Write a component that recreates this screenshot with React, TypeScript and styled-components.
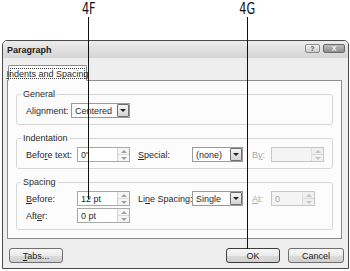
import * as React from 'react';
import styled, { createGlobalStyle } from 'styled-components';

const GlobalStyle = createGlobalStyle`
  html, body {
    margin: 0;
    padding: 0;
    background: #fff;
  }
  body {
    font-family: 'Liberation Sans', Arial, sans-serif;
    font-size: 9px;
    color: #2a2a2a;
  }
`;

const Page = styled.div`
  position: relative;
  width: 350px;
  height: 271px;
  overflow: hidden;
  background: #fff;
  padding-top: 40px;
  box-sizing: border-box;
`;

// callouts sit over the dialog
const Callout = styled.div<{ $x: number }>`
  position: absolute;
  top: 0;
  left: ${p => p.$x - 15}px;
  width: 31px;
  display: flex;
  flex-direction: column;
  align-items: center;
  z-index: 10;
  pointer-events: none;
`;

const CalloutLabel = styled.div`
  font-family: 'DejaVu Sans Condensed', 'DejaVu Sans', sans-serif;
  font-size: 16px;
  line-height: 17px;
  height: 17px;
  color: #111;
  transform: scaleX(0.78);
`;

const CalloutLine = styled.div<{ $len: number }>`
  width: 1px;
  height: ${p => p.$len}px;
  background: #111;
`;

const Dialog = styled.div`
  margin-left: 2px;
  width: 347px;
  height: 229px;
  box-sizing: border-box;
  border: 1px solid #4a4a4a;
  border-radius: 5px 5px 0 0;
  background: #eeeeee;
  display: flex;
  flex-direction: column;
`;

const TitleBar = styled.div`
  height: 17px;
  flex-shrink: 0;
  display: flex;
  align-items: center;
  padding: 0 3px 0 4px;
  background: linear-gradient(#ececec, #d5d5d5);
  border-radius: 4px 4px 0 0;
`;

const Title = styled.div`
  flex: 1;
  font-weight: bold;
  font-size: 9px;
  color: #1a1a1a;
`;

const CaptionButtons = styled.div`
  display: flex;
  gap: 3px;
  align-self: flex-start;
  margin-top: 3px;
`;

const CaptionButton = styled.div<{ $close?: boolean }>`
  width: ${p => (p.$close ? 22 : 15)}px;
  height: 9px;
  box-sizing: border-box;
  border: 1px solid ${p => (p.$close ? '#6a6a6a' : '#8a8a8a')};
  border-radius: 2px;
  background: ${p =>
    p.$close ? 'linear-gradient(#bdbdbd, #8d8d8d)' : 'linear-gradient(#f2f2f2, #cacaca)'};
  color: ${p => (p.$close ? '#f4f4f4' : '#555')};
  font-size: 7px;
  font-weight: bold;
  line-height: 7px;
  display: flex;
  align-items: center;
  justify-content: center;
`;

const Body = styled.div`
  flex: 1;
  display: flex;
  flex-direction: column;
  padding: 7px 4px 5px 4px;
`;

const TabStrip = styled.div`
  display: flex;
  position: relative;
  z-index: 1;
  margin-bottom: -1px;
`;

const Tab = styled.div`
  margin-left: 1px;
  width: 79px;
  height: 16px;
  box-sizing: border-box;
  border: 1px solid #8c8c8c;
  border-bottom: 1px solid #fff;
  border-radius: 2px 2px 0 0;
  background: #fff;
  padding: 2px 1px 1px;
`;

const FocusRect = styled.div`
  height: 100%;
  box-sizing: border-box;
  border: 1px dotted #444;
  display: flex;
  align-items: center;
  justify-content: center;
  white-space: nowrap;
`;

const Panel = styled.div`
  height: 159px;
  margin-right: 2px;
  box-sizing: border-box;
  border: 1px solid #8c8c8c;
  background: #fcfcfc;
  padding: 8px 8px 0;
  display: flex;
  flex-direction: column;
  gap: 8px;
`;

const Group = styled.fieldset`
  margin: 0;
  padding: 4px 9px 6px;
  border: 1px solid #d6d6d6;
  border-radius: 3px;
  min-width: 0;
  display: flex;
  flex-direction: column;
  gap: 2px;
`;

const Legend = styled.legend`
  padding: 0 2px;
  margin-left: -5px;
  line-height: 10px;
  height: 10px;
  font-size: 9px;
`;

const Row = styled.div`
  display: flex;
  align-items: center;
  height: 15px;
`;

const Label = styled.div<{ $w: number; $ml?: number; $disabled?: boolean }>`
  width: ${p => p.$w}px;
  margin-left: ${p => p.$ml || 0}px;
  flex-shrink: 0;
  white-space: nowrap;
  color: ${p => (p.$disabled ? '#a8a8a8' : '#2a2a2a')};
`;

const Combo = styled.div<{ $w: number }>`
  width: ${p => p.$w}px;
  height: 15px;
  flex-shrink: 0;
  box-sizing: border-box;
  border: 1px solid #9a9a9a;
  background: #fff;
  display: flex;
  align-items: center;
  padding-left: 3px;
`;

const FieldText = styled.span<{ $disabled?: boolean }>`
  flex: 1;
  white-space: nowrap;
  color: ${p => (p.$disabled ? '#a8a8a8' : '#2a2a2a')};
`;

const DropButton = styled.div`
  width: 12px;
  height: 13px;
  box-sizing: border-box;
  border: 1px solid #6e6e6e;
  border-radius: 1px;
  background: linear-gradient(#f6f6f6, #d4d4d4);
  display: flex;
  align-items: center;
  justify-content: center;
`;

const Arrow = styled.span<{ $up?: boolean; $color: string }>`
  width: 0;
  height: 0;
  border-left: 3px solid transparent;
  border-right: 3px solid transparent;
  ${p =>
    p.$up ? `border-bottom: 3px solid ${p.$color};` : `border-top: 3px solid ${p.$color};`}
`;

const Spin = styled.div<{ $w: number; $disabled?: boolean }>`
  width: ${p => p.$w}px;
  height: 15px;
  flex-shrink: 0;
  box-sizing: border-box;
  border: 1px solid ${p => (p.$disabled ? '#c6c6c6' : '#a8a8a8')};
  background: ${p => (p.$disabled ? '#f4f4f4' : '#fff')};
  display: flex;
  align-items: stretch;
  padding-left: 3px;
  > span {
    align-self: center;
  }
`;

const Spinner = styled.div<{ $disabled?: boolean }>`
  width: 11px;
  display: flex;
  flex-direction: column;
  border-left: 1px solid ${p => (p.$disabled ? '#dcdcdc' : '#d2d2d2')};
  background: ${p => (p.$disabled ? '#f0f0f0' : '#f5f5f5')};
`;

const SpinHalf = styled.div`
  flex: 1;
  display: flex;
  align-items: center;
  justify-content: center;
  & + & {
    border-top: 1px solid #dadada;
  }
`;

const Footer = styled.div`
  display: flex;
  align-items: center;
  margin-top: 9px;
  padding-left: 2px;
`;

const Button = styled.div<{ $w: number; $default?: boolean; $ml?: number }>`
  width: ${p => p.$w}px;
  margin-left: ${p => p.$ml || 0}px;
  height: 15px;
  box-sizing: border-box;
  border: 1px solid ${p => (p.$default ? '#3e3e3e' : '#707070')};
  border-radius: 3px;
  background: linear-gradient(#f7f7f7 0%, #ebebeb 50%, #dcdcdc 51%, #cfcfcf 100%);
  display: flex;
  align-items: center;
  justify-content: center;
  color: #1e1e1e;
`;

const Spacer = styled.div`
  flex: 1;
`;

const ComboField = ({ w, text }: { w: number; text: string }) => (
  <Combo $w={w}>
    <FieldText>{text}</FieldText>
    <DropButton>
      <Arrow $color="#1e1e1e" />
    </DropButton>
  </Combo>
);

const SpinField = ({ w, text, disabled }: { w: number; text: string; disabled?: boolean }) => {
  const c = disabled ? '#c4c4c4' : '#a0a0a0';
  return (
    <Spin $w={w} $disabled={disabled}>
      <FieldText $disabled={disabled}>{text}</FieldText>
      <Spinner $disabled={disabled}>
        <SpinHalf>
          <Arrow $up $color={c} />
        </SpinHalf>
        <SpinHalf>
          <Arrow $color={c} />
        </SpinHalf>
      </Spinner>
    </Spin>
  );
};

export default function App() {
  return (
    <Page>
      <GlobalStyle />
      <Callout $x={88}>
        <CalloutLabel>4F</CalloutLabel>
        <CalloutLine $len={182} />
      </Callout>
      <Callout $x={247}>
        <CalloutLabel>4G</CalloutLabel>
        <CalloutLine $len={232} />
      </Callout>

      <Dialog>
        <TitleBar>
          <Title>Paragraph</Title>
          <CaptionButtons>
            <CaptionButton>?</CaptionButton>
            <CaptionButton $close>X</CaptionButton>
          </CaptionButtons>
        </TitleBar>

        <Body>
          <TabStrip>
            <Tab>
              <FocusRect>
                <span>
                  <u>I</u>ndents and Spacing
                </span>
              </FocusRect>
            </Tab>
          </TabStrip>

          <Panel>
            <Group>
              <Legend>General</Legend>
              <Row>
                <Label $w={45}>
                  Ali<u>g</u>nment:
                </Label>
                <ComboField w={59} text="Centered" />
              </Row>
            </Group>

            <Group>
              <Legend>Indentation</Legend>
              <Row>
                <Label $w={51}>
                  Befo<u>r</u>e text:
                </Label>
                <SpinField w={53} text={'0"'} />
                <Label $w={54} $ml={8}>
                  <u>S</u>pecial:
                </Label>
                <ComboField w={51} text="(none)" />
                <Label $w={19} $ml={9} $disabled>
                  B<u>y</u>:
                </Label>
                <SpinField w={53} text="" disabled />
              </Row>
            </Group>

            <Group>
              <Legend>Spacing</Legend>
              <Row>
                <Label $w={51}>
                  <u>B</u>efore:
                </Label>
                <SpinField w={53} text="12 pt" />
                <Label $w={54} $ml={8}>
                  Li<u>n</u>e Spacing:
                </Label>
                <ComboField w={51} text="Single" />
                <Label $w={19} $ml={9} $disabled>
                  <u>A</u>t:
                </Label>
                <SpinField w={44} text="0" disabled />
              </Row>
              <Row>
                <Label $w={51}>
                  Aft<u>e</u>r:
                </Label>
                <SpinField w={53} text="0 pt" />
              </Row>
            </Group>
          </Panel>

          <Footer>
            <Button $w={54}>
              <span>
                <u>T</u>abs...
              </span>
            </Button>
            <Spacer />
            <Button $w={54} $default>
              OK
            </Button>
            <Button $w={56} $ml={8}>
              Cancel
            </Button>
          </Footer>
        </Body>
      </Dialog>
    </Page>
  );
}
